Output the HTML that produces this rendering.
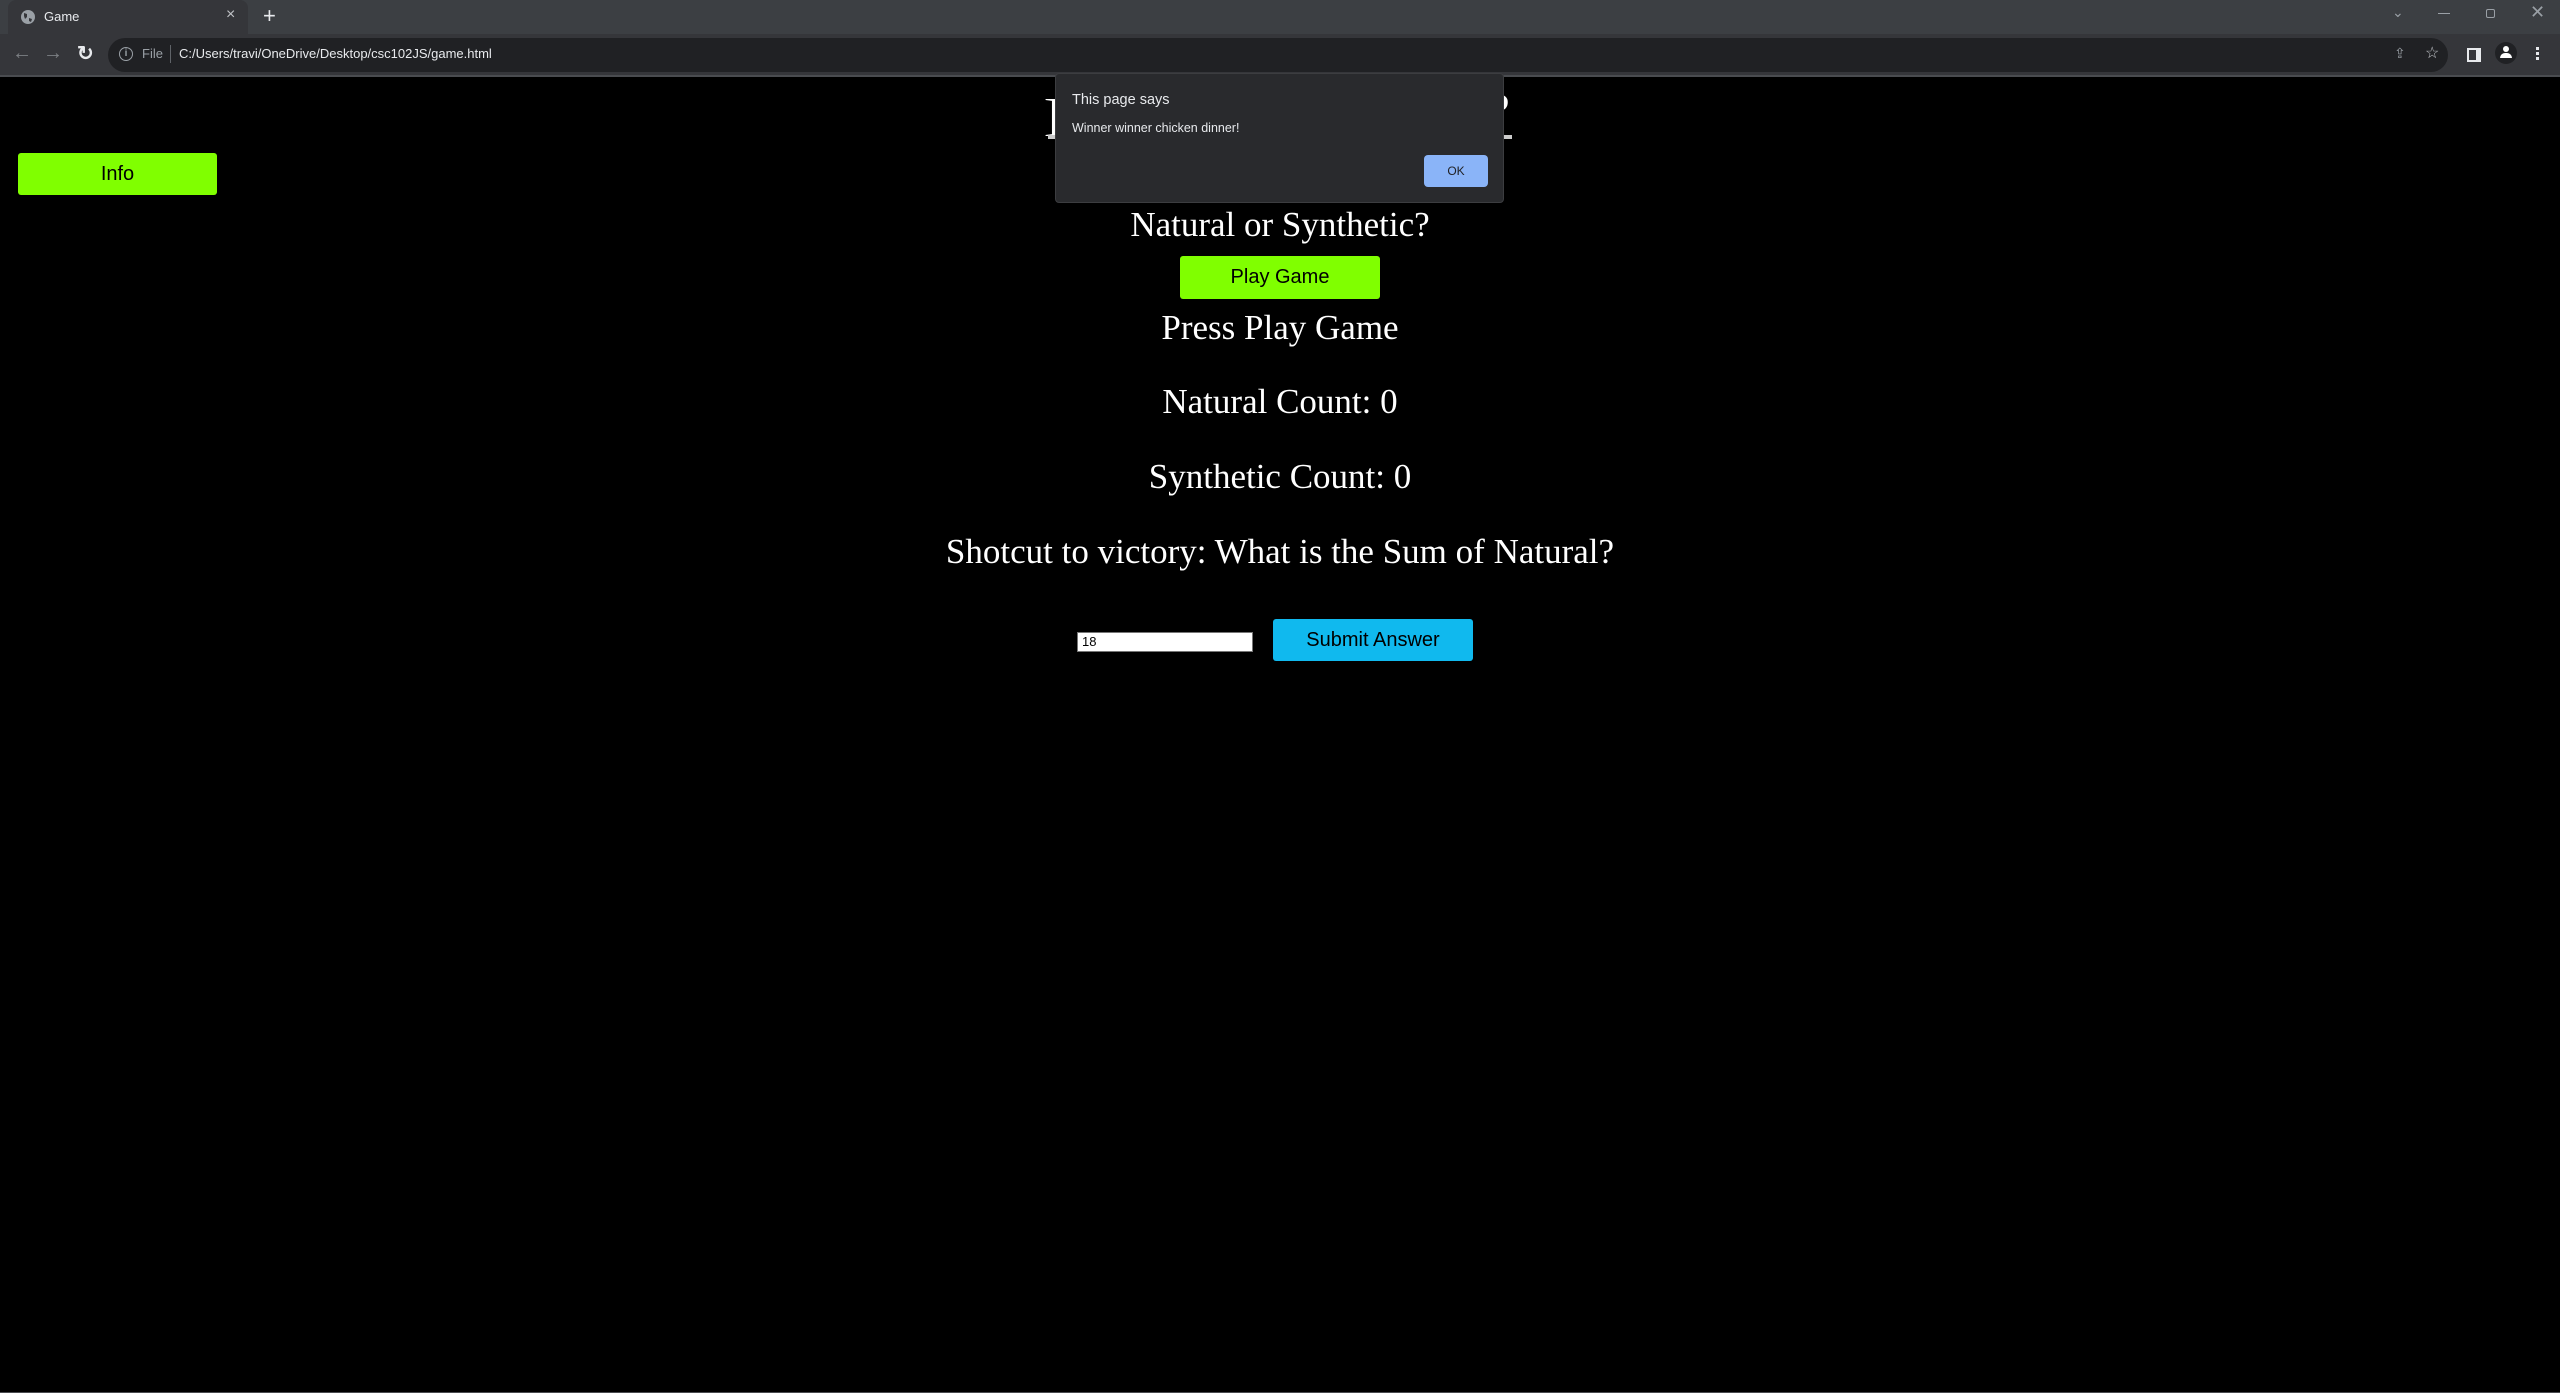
<!DOCTYPE html>
<html><head><meta charset="utf-8"><style>
*{margin:0;padding:0;box-sizing:border-box}
body{width:2560px;height:1393px;background:#000;position:relative;overflow:hidden;font-family:"Liberation Sans",sans-serif}
.a{position:absolute}
.t{position:absolute;left:0;width:2560px;text-align:center;color:#fff;font-family:"Liberation Serif",serif;font-size:35px;line-height:36px;white-space:nowrap}
</style></head><body>
<div class="a" style="left:0;top:0;width:2560px;height:34px;background:#3c3f43"></div>
<div class="a" style="left:8px;top:0;width:240px;height:34px;background:#35363a;border-radius:8px 8px 0 0"></div>
<svg class="a" style="left:20px;top:9px" width="16" height="16" viewBox="0 0 16 16"><circle cx="8" cy="8" r="7" fill="#9aa0a6"/><path d="M4 4l3 1 0 3-2 2-1-3zM9 9l3 1-1 3-2-1z" fill="#35363a"/></svg>
<div class="a" style="left:44px;top:9px;color:#e8eaed;font-size:13px">Game</div>
<div class="a" style="left:226px;top:6px;color:#c0c3c7;font-size:16px">×</div>
<div class="a" style="left:263px;top:3px;color:#e8eaed;font-size:22px">+</div>
<div class="a" style="left:2392px;top:4px;color:#9aa0a6;font-size:14px">⌄</div>
<div class="a" style="left:2438px;top:13px;width:12px;height:1px;background:#9aa0a6"></div>
<div class="a" style="left:2486px;top:9px;width:9px;height:9px;border:1px solid #9aa0a6;border-radius:2px"></div>
<div class="a" style="left:2530px;top:2px;color:#9aa0a6;font-size:18px">✕</div>
<div class="a" style="left:0;top:34px;width:2560px;height:42px;background:#35363a"></div>
<div class="a" style="left:12px;top:42px;color:#7d8084;font-size:20px">←</div>
<div class="a" style="left:43px;top:42px;color:#7d8084;font-size:20px">→</div>
<div class="a" style="left:77px;top:41px;color:#e8eaed;font-size:20px;font-weight:bold">↻</div>
<div class="a" style="left:108px;top:38px;width:2340px;height:34px;background:#202124;border-radius:17px"></div>
<div class="a" style="left:119px;top:47px;width:14px;height:14px;border:1.5px solid #9aa0a6;border-radius:50%;color:#9aa0a6;font-size:10px;line-height:11px;text-align:center;font-weight:bold">i</div>
<div class="a" style="left:142px;top:46px;color:#9aa0a6;font-size:13px">File</div>
<div class="a" style="left:170px;top:45px;width:1px;height:18px;background:#5f6368"></div>
<div class="a" style="left:179px;top:46px;color:#e8eaed;font-size:13px">C:/Users/travi/OneDrive/Desktop/csc102JS/game.html</div>
<div class="a" style="left:2394px;top:45px;color:#9aa0a6;font-size:14px">⇪</div>
<div class="a" style="left:2425px;top:43px;color:#c0c3c7;font-size:16px">☆</div>
<div class="a" style="left:2467px;top:48px;width:14px;height:14px;background:#e8eaed;border:2px solid #e8eaed"><div style="width:7px;height:10px;background:#35363a"></div></div>
<div class="a" style="left:2495px;top:42px;width:22px;height:22px;border-radius:50%;background:#202124"><div style="margin:4px auto 0;width:6px;height:6px;border-radius:50%;background:#fff"></div><div style="margin:1px auto 0;width:12px;height:5px;border-radius:5px 5px 0 0;background:#fff"></div></div>
<div class="a" style="left:2536px;top:47px;width:3px;height:3px;background:#e8eaed;box-shadow:0 5px #e8eaed,0 10px #e8eaed"></div>
<div class="a" style="left:0;top:75px;width:2560px;height:2px;background:#4a4c50"></div>

<div class="a" style="left:18px;top:153px;width:199px;height:42px;background:#80ff00;border-radius:3px;text-align:center;font-size:20px;line-height:42px;color:#000">Info</div>

<div class="a" style="left:1044px;top:94px;color:#fff;font-family:'Liberation Serif',serif;font-size:44px;line-height:44px">]</div>
<div class="a" style="left:1490px;top:88px;color:#fff;font-family:'Liberation Serif',serif;font-size:44px;line-height:44px">?</div>
<div class="a" style="left:1048px;top:135px;width:464px;height:4px;background:#ccc"></div>

<div class="a" style="left:1055px;top:73px;width:449px;height:130px;background:#292a2d;border:1px solid #3c3d40;border-radius:4px"></div>
<div class="a" style="left:1072px;top:92px;color:#e8eaed;font-size:14.5px">This page says</div>
<div class="a" style="left:1072px;top:121px;color:#e8eaed;font-size:12.5px">Winner winner chicken dinner!</div>
<div class="a" style="left:1424px;top:155px;width:64px;height:32px;background:#8ab4f8;border-radius:4px;color:#202124;font-size:12px;line-height:32px;text-align:center">OK</div>

<div class="t" style="top:207px">Natural or Synthetic?</div>
<div class="a" style="left:1180px;top:256px;width:200px;height:43px;background:#80ff00;border-radius:3px;text-align:center;font-size:20px;line-height:43px;color:#000">Play Game</div>
<div class="t" style="top:310px">Press Play Game</div>
<div class="t" style="top:384px">Natural Count: 0</div>
<div class="t" style="top:459px">Synthetic Count: 0</div>
<div class="t" style="top:534px">Shotcut to victory: What is the Sum of Natural?</div>
<div class="a" style="left:1077px;top:632px;width:176px;height:20px;background:#fff;border:1px solid #767676;font-size:13px;line-height:18px;padding-left:4px;color:#000">18</div>
<div class="a" style="left:1273px;top:619px;width:200px;height:42px;background:#10b9ee;border-radius:3px;text-align:center;font-size:20px;line-height:42px;color:#000">Submit Answer</div>
<div class="a" style="left:0;top:1392px;width:2560px;height:1px;background:#4a4c50"></div>
</body></html>
